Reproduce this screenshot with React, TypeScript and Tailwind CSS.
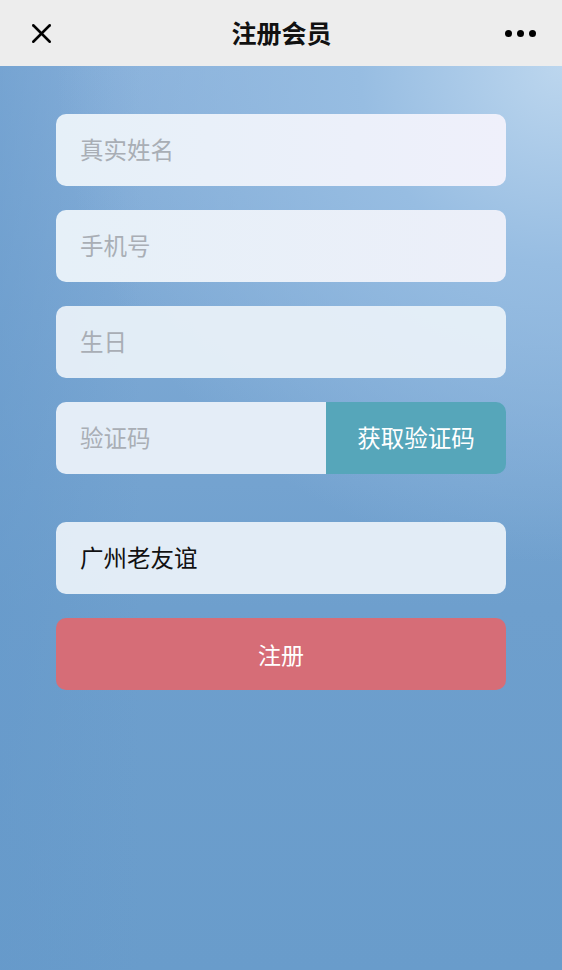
import { X } from "lucide-react";

const inputBox = "flex h-[72px] items-center rounded-[10px] bg-[#e8f0f8]/95 px-6 text-[23.5px]";

export default function App() {
    return (
        <div className="flex min-h-[970px] w-full flex-col font-['Noto_Sans_CJK_SC',sans-serif]">
            <header className="flex h-[66px] shrink-0 items-center justify-between bg-[#ededed] pl-[25px] pr-[26px]">
                <X className="h-[33px] w-[33px] text-black" strokeWidth={1.8} />
                <h1 className="text-[25px] font-bold text-[#111]">注册会员</h1>
                <div className="flex items-center gap-[5px]">
                    <span className="h-[7px] w-[7px] rounded-full bg-black" />
                    <span className="h-[7px] w-[7px] rounded-full bg-black" />
                    <span className="h-[7px] w-[7px] rounded-full bg-black" />
                </div>
            </header>
            <main className="relative flex-1 bg-[#6a9ecc] bg-[radial-gradient(ellipse_90%_55%_at_100%_0%,#bcd6ee_0%,#97bde2_40%,rgba(106,158,204,0)_100%),linear-gradient(90deg,rgba(100,152,202,0.5)_0%,rgba(100,152,202,0)_25%),linear-gradient(180deg,#88b0da_0%,#6e9fcd_60%,#699ccb_100%)] px-[56px] pt-[48px]">
                <div className="flex flex-col gap-[24px]">
                    <div className={`${inputBox} bg-gradient-to-r from-[#e6f0f8] to-[#eff0fb] text-[#a9aeb5]`}>真实姓名</div>
                    <div className={`${inputBox} bg-gradient-to-r from-[#e6f0f8] to-[#eceff9] text-[#a9aeb5]`}>手机号</div>
                    <div className={`${inputBox} text-[#a9aeb5]`}>生日</div>
                    <div className="flex h-[72px] overflow-hidden rounded-[10px]">
                        <div className="flex flex-1 items-center bg-[#e4edf7] px-6 text-[23.5px] text-[#a9aeb5]">验证码</div>
                        <button className="flex w-[180px] items-center justify-center bg-[#56a6ba] text-[23.5px] text-white">获取验证码</button>
                    </div>
                    <div className={`${inputBox} mt-[24px] bg-[#e3edf7] text-[#111]`}>广州老友谊</div>
                    <button className="flex h-[72px] items-center justify-center rounded-[10px] bg-[#d66d77] text-[23px] text-white">注册</button>
                </div>
            </main>
        </div>
    );
}
